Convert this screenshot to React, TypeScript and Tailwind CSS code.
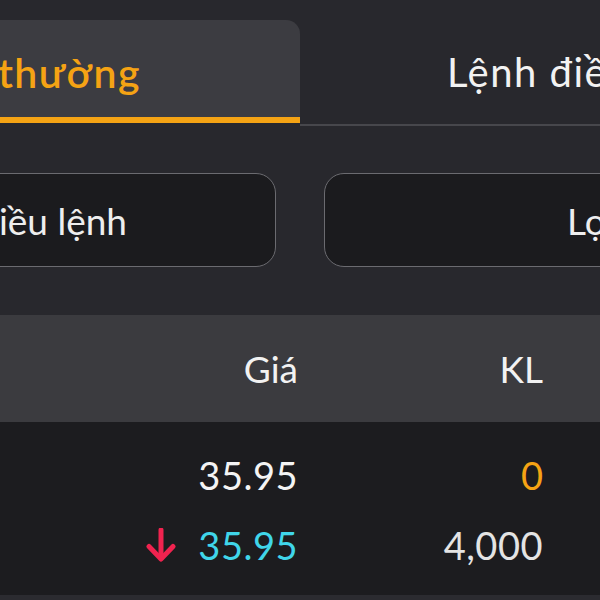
import React from "react";

function DownArrow() {
  return (
    <svg width="30" height="34" viewBox="0 0 30 34" fill="none">
      <path d="M15 2 V30" stroke="#f0234f" strokeWidth="5" strokeLinecap="round" />
      <path d="M3 18.5 L15 31 L27 18.5" stroke="#f0234f" strokeWidth="5" strokeLinecap="round" strokeLinejoin="round" />
    </svg>
  );
}

export default function App() {
  return (
    <div
      className="w-[600px] h-[600px] overflow-hidden bg-[#28282d] text-[#f2f2f2]"
      style={{ fontFamily: "Lato, 'Noto Sans', sans-serif" }}
    >
      {/* Tabs */}
      <div className="mt-[20px] flex h-[106px]">
        <div className="w-[300px] h-[103px] shrink-0 bg-[#3c3c41] rounded-tr-[14px] border-b-[6px] border-[#f5a314] flex justify-end pr-[159px] pt-[32px]">
          <span className="whitespace-nowrap text-[41px] leading-none font-semibold tracking-[1.5px] text-[#f5a314]">
            Lệnh thường
          </span>
        </div>
        <div className="flex-1 h-[106px] border-b-2 border-[#47474c] pl-[147px] pt-[32px]">
          <span className="whitespace-nowrap text-[40px] leading-none tracking-[1.5px] text-[#f2f2f2]">
            Lệnh điều kiện
          </span>
        </div>
      </div>

      {/* Selectors */}
      <div className="mt-[47px] flex gap-[48px]">
        <div className="-ml-[60px] w-[336px] h-[94px] shrink-0 rounded-[20px] border-[1.5px] border-[#6b6b70] bg-[#1b1b1e] flex items-center justify-end pr-[148px]">
          <span className="whitespace-nowrap text-[37px] leading-none text-[#eeeeee]">Chiều lệnh</span>
        </div>
        <div className="w-[340px] h-[94px] shrink-0 rounded-[20px] border-[1.5px] border-[#6b6b70] bg-[#1b1b1e] flex items-center pl-[242px]">
          <span className="whitespace-nowrap text-[37px] leading-none text-[#eeeeee]">Lọc lệnh</span>
        </div>
      </div>

      {/* Table header */}
      <div className="mt-[48px] h-[107px] bg-[#3b3b3f] flex items-center text-[37px] leading-none text-[#f2f2f2]">
        <div className="w-[298px] shrink-0 text-right">Giá</div>
        <div className="w-[245px] shrink-0 text-right">KL</div>
      </div>

      {/* Rows */}
      <div className="bg-[#1c1c1f] pt-[18px] pb-[15px] text-[38px] leading-none">
        <div className="h-[70px] flex items-center">
          <div className="w-[298px] shrink-0 text-right tracking-[0.5px] text-[#f4f4f4]">35.95</div>
          <div className="w-[245px] shrink-0 text-right text-[#f5a314]">0</div>
        </div>
        <div className="h-[70px] flex items-center">
          <div className="w-[298px] shrink-0 flex items-center justify-end gap-[22px]">
            <DownArrow />
            <span className="tracking-[0.5px] text-[#40d6ea]">35.95</span>
          </div>
          <div className="w-[245px] shrink-0 text-right tracking-[0.5px] text-[#e4e4e4]">4,000</div>
        </div>
      </div>
      <div className="h-[5px] bg-[#2b2b30]" />
    </div>
  );
}
